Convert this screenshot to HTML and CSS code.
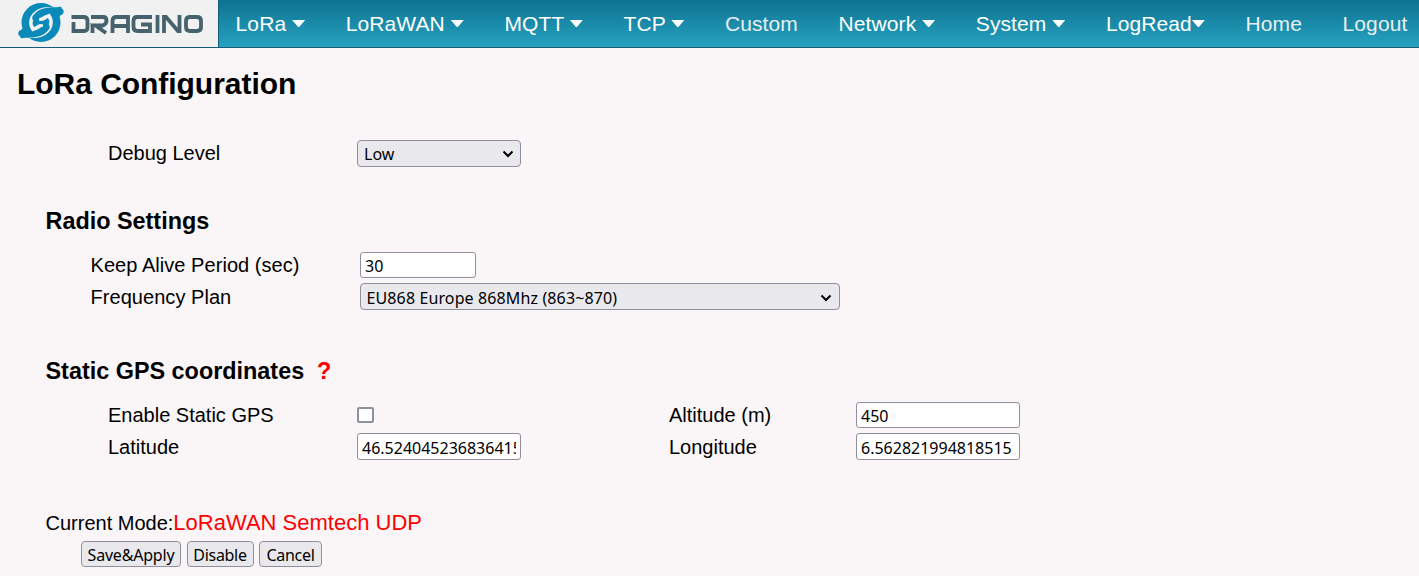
FILE: index.html
```
<!DOCTYPE html>
<html lang="en">
<head>
<meta charset="utf-8">
<title>LoRa Configuration</title>
<link rel="stylesheet" href="styles.css">
</head>
<body>
<header class="topbar">
  <a class="brand" href="#">
    <svg class="brand-logo" viewBox="0 0 218 47" width="218" height="47" role="img" aria-label="Dragino">
      <defs>
        <path id="tail" d="M54 7C57 8 60 6 61 7C62 7.500 61.500 9 63 9.500C64.500 11 63.500 15 61 15L57 19L49 10Z"/>
        <path id="gap" d="M54 7.500C45 5.500 36 8.500 31.500 15C28 20 28.500 27 32.500 31.500C35.500 30 38.500 29.500 40.500 27.500C43 27.500 44 25.500 42.500 24.300C40.500 23 37 25 34.500 27C32.500 25.500 32 22.500 33.300 20.500C31.500 18.500 32 16.500 34 14.500C38 9.500 45 7 54 7.500Z"/>
      </defs>
      <g class="brand-mark">
        <circle cx="41" cy="22.500" r="19.500"/>
        <use href="#tail"/>
        <use href="#tail" transform="rotate(180 41 22.500)"/>
      </g>
      <g class="brand-gap">
        <use href="#gap"/>
        <use href="#gap" transform="rotate(180 41 22.500)"/>
      </g>
      <g class="brand-letters">
        <path d="M73.500 22V31H84Q87.500 31 87.500 27.500V21Q87.500 17 83.500 17H71.500M92.500 33V23.500M91 17H103Q106.500 17 106.500 20.500T103 25.500H95.500L106 33M112.500 33V21Q112.500 17 116.500 17H128V33M112.500 26H128M152 17H137Q133.500 17 133.500 21V27Q133.500 31 137.500 31H150V24.500H141M157.500 15V33M164 33V17H166L178 31H179.500V15M189 17H197Q201 17 201 21V27Q201 31 197 31H190Q186 31 186 27V21Q186 17 190 17"/>
      </g>
    </svg>
  </a>
  <nav class="menu">
    <a class="item" href="#">LoRa <i class="caret"></i></a>
    <a class="item" href="#">LoRaWAN <i class="caret"></i></a>
    <a class="item" href="#">MQTT <i class="caret"></i></a>
    <a class="item" href="#">TCP <i class="caret"></i></a>
    <a class="item plain" href="#">Custom</a>
    <a class="item" href="#">Network <i class="caret"></i></a>
    <a class="item" href="#">System <i class="caret"></i></a>
    <a class="item" href="#">LogRead<i class="caret"></i></a>
    <a class="item plain" href="#">Home</a>
    <a class="item plain" href="#">Logout</a>
  </nav>
</header>
<main class="page">
  <h1 class="title">LoRa Configuration</h1>
  <form class="form">
    <div class="row debug">
      <label>Debug Level</label>
      <div class="field select medium"><span>Low</span><svg class="chevron" viewBox="0 0 12 8"><path d="M1.500 1.500L6 6L10.500 1.500"/></svg></div>
    </div>
    <h2 class="section">Radio Settings</h2>
    <div class="rows radio">
      <div class="row"><label>Keep Alive Period (sec)</label><input class="field short" value="30"></div>
      <div class="row"><label>Frequency Plan</label>
        <div class="field select wide"><span>EU868 Europe 868Mhz (863~870)</span><svg class="chevron" viewBox="0 0 12 8"><path d="M1.500 1.500L6 6L10.500 1.500"/></svg></div>
      </div>
    </div>
    <h2 class="section gps-title">Static GPS coordinates <a class="help" href="#">?</a></h2>
    <div class="rows gps">
      <div class="row"><label>Enable Static GPS</label><span class="cell"><span class="check"></span></span><label>Altitude (m)</label><input class="field medium altitude" value="450"></div>
      <div class="row position"><label>Latitude</label><span class="cell"><input class="field medium" value="46.524045236836415"></span><label>Longitude</label><input class="field medium" value="6.562821994818515"></div>
    </div>
    <p class="mode">Current Mode:<span class="mode-value">LoRaWAN Semtech UDP</span></p>
    <div class="actions">
      <button class="btn save" type="button">Save&amp;Apply</button>
      <button class="btn disable" type="button">Disable</button>
      <button class="btn cancel" type="button">Cancel</button>
    </div>
  </form>
</main>
</body>
</html>
```
FILE: styles.css
```
* { box-sizing: border-box; }
body {
  margin: 0;
  height: 576px;
  overflow: hidden;
  background: #faf6f8;
  color: #000;
  font: 20px/24px "Liberation Sans", Arial, sans-serif;
}
.topbar {
  display: flex;
  height: 48px;
  border-bottom: 1px solid #155a78;
  background: linear-gradient(#0d7391, #26a2c0);
}
.brand {
  flex: none;
  width: 219px;
  background: #f1f1f1;
  border-right: 1px solid #155a78;
}
.brand-logo { display: block; }
.brand-mark { fill: #0a8ab8; }
.brand-gap { fill: #f1f1f1; }
.brand-letters { fill: none; stroke: #46626c; stroke-width: 3.8; }
.menu {
  flex: 1;
  display: flex;
  justify-content: space-between;
  align-items: center;
  padding: 0 11.6px 0 16.6px;
}
.item {
  display: flex;
  align-items: center;
  color: #fff;
  font-size: 21px;
  letter-spacing: 0.1px;
  text-decoration: none;
  white-space: pre;
}
.plain { color: #e8eff0; }
.caret {
  width: 13px;
  height: 7px;
  background: #fff;
  clip-path: polygon(0 0, 100% 0, 54% 100%, 46% 100%);
}
.page { padding: 18px 18px 0 17px; }
.title { margin: 0; font-size: 30px; line-height: 36px; letter-spacing: -0.04px; }
.form { padding-left: 28.5px; }
.row { display: flex; align-items: center; }
.debug { margin-top: 38px; padding-left: 62.5px; }
.debug label { width: 249px; margin-top: -2px; }
.section { margin: 40px 0 0; font-size: 23.4px; line-height: 28px; }
.rows { display: grid; gap: 5px; }
.radio { padding-left: 45px; margin-top: 17px; }
.radio label { width: 269.5px; letter-spacing: 0.05px; }
.gps { padding-left: 62.5px; margin-top: 17px; }
.gps label { width: 249px; margin-top: -1px; }
.gps .position label { margin-top: 1px; }
.gps .cell { display: flex; width: 312px; }
.gps .cell + label { width: 187px; }
.field {
  height: 27px;
  margin: 0;
  padding: 2px 4px 0;
  border: 1px solid #8f8f9d;
  border-radius: 3px;
  background: #fff;
  color: #000;
  font: 16px/22px "Noto Sans", sans-serif;
}
.short,
.altitude { height: 26px; }
.short { width: 116px; }
.medium { width: 164px; }
.select {
  display: flex;
  justify-content: space-between;
  align-items: center;
  padding: 1px 6px 0;
  border-radius: 4px;
  background: #e9e9ed;
}
.wide { width: 480px; letter-spacing: 0.12px; padding: 2px 7px 0 5.5px; }
.chevron { width: 12px; height: 8px; fill: none; stroke: #000; stroke-width: 2; }
.check { width: 17px; height: 16px; border: 2px solid #8f8f9d; border-radius: 2px; background: #fff; }
.gps-title { margin-top: 47px; }
.help { margin-left: 6.4px; color: #f00; text-decoration: none; }
.mode { margin: 50px 0 0; line-height: 26px; }
.mode-value { color: #f00; font-size: 22px; }
.actions { display: flex; gap: 5.5px; padding-left: 35.5px; margin-top: 5px; }
.btn {
  height: 26px;
  padding: 1px 0 0;
  border: 1px solid #8f8f9d;
  border-radius: 4px;
  background: #e9e9ed;
  color: #000;
  font: 16px/22px "Noto Sans", sans-serif;
}
.save { width: 100px; letter-spacing: -0.2px; }
.disable { width: 67px; letter-spacing: -0.3px; }
.cancel { width: 63px; letter-spacing: -0.3px; }
```
